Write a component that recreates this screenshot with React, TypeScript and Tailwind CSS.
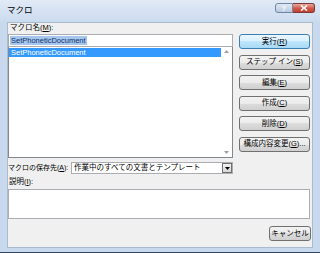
import React from "react";

const Mn = ({ children }: { children: React.ReactNode }) => <span className="underline">{children}</span>;

const Btn = ({ children, primary }: { children: React.ReactNode; primary?: boolean }) => (
  <div
    className={
      primary
        ? "h-[15px] flex items-center justify-center whitespace-nowrap rounded-[3px] border border-[#3c7fb1] bg-[linear-gradient(#eaf6fd,#d9f0fc_50%,#bee6fd_50%,#a7d9f5)] text-black"
        : "h-[15px] flex items-center justify-center whitespace-nowrap rounded-[3px] border border-[#707070] bg-[linear-gradient(#f2f2f2,#ebebeb_50%,#dddddd_50%,#cfcfcf)] text-black"
    }
  >
    {children}
  </div>
);

export default function App() {
  return (
    <div className="w-[320px] h-[253px] overflow-hidden flex flex-col bg-[#c8d9ee] border-b border-[#2f4560] font-['Liberation_Sans','Noto_Sans_CJK_JP',sans-serif] text-[7.5px] text-black">
      {/* title bar */}
      <div className="h-[22px] flex justify-between pl-[7px] pr-[5px] bg-[linear-gradient(#e1eaf6,#cbdbef)]">
        <span className="mt-[5px] text-[8.5px] leading-[11px] text-black">マクロ</span>
        <div className="flex mt-[3px] h-[10px]">
          <div className="w-[18px] h-[10px] rounded-l-[3px] border border-[#7086a2] bg-[linear-gradient(#dfe8f4,#b9cbe0)] flex items-center justify-center text-[7px] font-bold text-white leading-none">
            ?
          </div>
          <div className="w-[22px] h-[10px] rounded-r-[3px] border border-l-0 border-[#7a3a3a] bg-[linear-gradient(#e9a99c,#d0574a_55%,#c8402e)] flex items-center justify-center">
            <svg width="8" height="6" viewBox="0 0 8 6">
              <path d="M1 0.5 L7 5.5 M7 0.5 L1 5.5" stroke="#fff" strokeWidth="1.6" />
            </svg>
          </div>
        </div>
      </div>

      {/* client area */}
      <div className="flex-1 mx-[7px] mb-[4px] bg-[#f0f0f0] border border-[#aabbd0] flex flex-col">
        <div className="flex gap-[6px]">
          {/* left column */}
          <div className="w-[225px] flex flex-col">
            <div className="h-[10px] leading-[10px] pl-[2px] whitespace-nowrap">
              マクロ名(<Mn>M</Mn>):
            </div>
            <div className="mt-[1px] h-[13px] bg-white border border-[#abadb3] flex items-center pl-[1px]">
              <span className="bg-[#a5c7ee] text-[#13306a] leading-[9px] px-[1px]">SetPhoneticDocument</span>
            </div>
            <div className="h-[111px] bg-white border border-[#828790] border-t-0 flex">
              <div className="flex-1 pt-[1px]">
                <div className="h-[9px] bg-[#3399ff] text-white leading-[9px] pl-[2px]">SetPhoneticDocument</div>
              </div>
              <div className="w-[11px] flex flex-col justify-between items-center py-[3px]">
                <svg width="5" height="3" viewBox="0 0 5 3">
                  <path d="M0 3 L2.5 0 L5 3 Z" fill="#a0a0a0" />
                </svg>
                <svg width="5" height="3" viewBox="0 0 5 3">
                  <path d="M0 0 L2.5 3 L5 0 Z" fill="#a0a0a0" />
                </svg>
              </div>
            </div>
            <div className="mt-[4px] h-[12px] flex items-center">
              <div className="w-[63px] whitespace-nowrap text-[7px]">
                マクロの保存先(<Mn>A</Mn>):
              </div>
              <div className="flex-1 h-[12px] bg-white border border-[#abadb3] flex items-center">
                <span className="flex-1 pl-[2px] leading-[10px] whitespace-nowrap">作業中のすべての文書とテンプレート</span>
                <div className="w-[10px] h-[10px] border border-[#707070] bg-[linear-gradient(#f2f2f2,#d6d6d6)] flex items-center justify-center">
                  <svg width="5" height="3" viewBox="0 0 5 3">
                    <path d="M0 0 L2.5 3 L5 0 Z" fill="#000" />
                  </svg>
                </div>
              </div>
            </div>
          </div>

          {/* right buttons */}
          <div className="w-[71px] pt-[11px] flex flex-col gap-[5.5px]">
            <Btn primary>
              実行(<Mn>R</Mn>)
            </Btn>
            <Btn>
              ステップ イン(<Mn>S</Mn>)
            </Btn>
            <Btn>
              編集(<Mn>E</Mn>)
            </Btn>
            <Btn>
              作成(<Mn>C</Mn>)
            </Btn>
            <Btn>
              削除(<Mn>D</Mn>)
            </Btn>
            <Btn>
              構成内容変更(<Mn>G</Mn>)...
            </Btn>
          </div>
        </div>

        <div className="mt-[3px] h-[10px] leading-[10px] pl-[1px] whitespace-nowrap">
          説明(<Mn>I</Mn>):
        </div>
        <div className="mt-[2px] mr-[2px] h-[30px] bg-white border border-[#abadb3]" />
        <div className="mt-[7px] flex justify-end pr-[1px]">
          <div className="w-[42px]">
            <Btn>キャンセル</Btn>
          </div>
        </div>
      </div>
    </div>
  );
}
